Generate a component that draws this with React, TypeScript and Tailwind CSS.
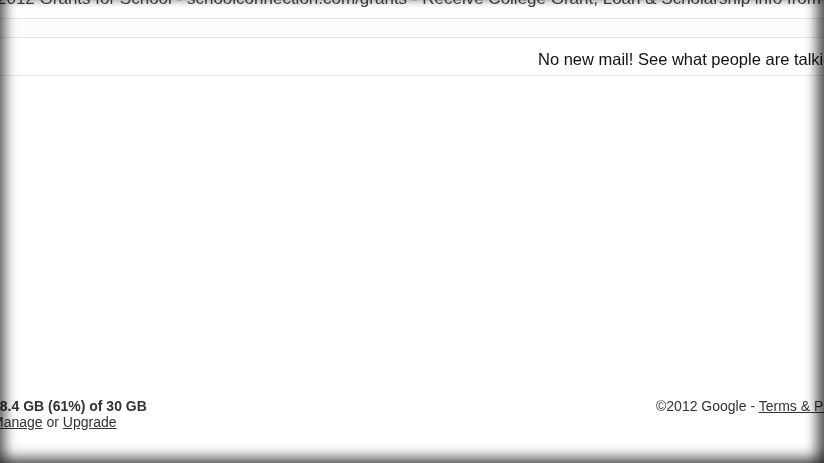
export default function App() {
  return (
    <div className="relative h-[463px] w-[824px] overflow-hidden bg-white font-['Liberation_Sans',Arial,sans-serif]">
      <div className="blur-[0.5px]">
        {/* Ad line, cut at the top */}
        <div className="h-[19px] overflow-hidden border-b border-[#e3e3e3]">
          <p className="-mt-[11px] -ml-[3px] whitespace-nowrap text-[17px] leading-[20px] text-[#444]">
            2012 Grants for School - schoolconnection.com/grants - Receive College Grant, Loan &amp; Scholarship info from
          </p>
        </div>

        {/* Empty toolbar row */}
        <div className="h-[19px] border-b border-[#e3e3e3] bg-[#fcfcfc]" />

        {/* Empty inbox message */}
        <div className="h-[38px] overflow-hidden border-b border-[#e3e3e3]">
          <p className="whitespace-nowrap pl-[538px] pt-[11px] text-[16.5px] leading-[20px] text-[#111]">
            No new mail! See what people are talking about
          </p>
        </div>

        {/* Footer */}
        <div className="mt-[322px] flex items-start justify-between text-[14px] leading-[16px] text-[#333]">
          <div className="-ml-[8px] whitespace-nowrap">
            <div className="font-bold">18.4 GB (61%) of 30 GB</div>
            <div>
              <span className="underline">Manage</span> or <span className="underline">Upgrade</span>
            </div>
          </div>
          <div className="w-[168px] overflow-hidden whitespace-nowrap">
            ©2012 Google - <span className="underline">Terms &amp; Privacy</span>
          </div>
        </div>
      </div>

      {/* Vignette */}
      <div className="pointer-events-none absolute inset-0 shadow-[inset_10px_0_12px_-4px_rgba(0,0,0,0.55),inset_-12px_0_12px_-4px_rgba(0,0,0,0.6),inset_0_-12px_12px_-4px_rgba(0,0,0,0.45)]" />
    </div>
  );
}
